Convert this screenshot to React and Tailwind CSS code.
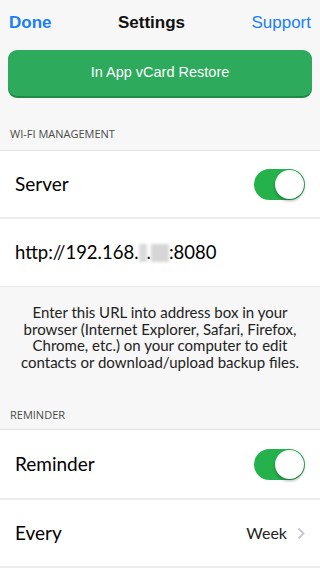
import React, { useState } from "react";

const Toggle = ({ on, setOn }) => (
  <button
    onClick={() => setOn(!on)}
    className={`relative w-[51px] h-[31px] rounded-full transition-colors ${on ? "bg-[#25b14b]" : "bg-[#e5e5e5]"}`}
  >
    <span
      className={`absolute top-[1px] w-[29px] h-[29px] rounded-full bg-white shadow-[0_2px_3px_rgba(0,0,0,0.3)] transition-all ${on ? "left-[21px]" : "left-[1px]"}`}
    />
  </button>
);

const App = () => {
  const [server, setServer] = useState(true);
  const [reminder, setReminder] = useState(true);

  return (
    <div className="w-[320px] h-[568px] overflow-hidden bg-[#f7f7f7] text-black font-['Lato',sans-serif]">
      {/* Nav */}
      <div className="flex items-center justify-between h-[44px] px-[9px] pt-[1px] font-['Liberation_Sans',sans-serif] text-[17px]">
        <span className="text-[#1a7ef7] font-bold">Done</span>
        <span className="font-bold text-[#111]">Settings</span>
        <span className="text-[#1a7ef7]">Support</span>
      </div>

      {/* Restore button */}
      <div className="px-[8px] pt-[6px]">
        <button className="w-full h-[46px] rounded-[9px] bg-[#2daa5b] shadow-[0_2px_0_#208a47] text-white text-[14.5px] font-['Liberation_Sans',sans-serif]">
          In App vCard Restore
        </button>
      </div>

      {/* Wi-Fi section */}
      <p className="mt-[31px] px-[10px] text-[11px] text-[#4a4a4a] leading-[13px] font-['Open_Sans',sans-serif]">WI-FI MANAGEMENT</p>
      <div className="mt-[10px] bg-white border-t border-[#e2e2e2]">
        <div className="flex items-center justify-between h-[66px] pl-[15px] pr-[15px]">
          <span className="text-[19px]">Server</span>
          <Toggle on={server} setOn={setServer} />
        </div>
        <div className="h-[2px] bg-[#ececec]" />
        <div className="flex items-center h-[67px] pl-[15px] text-[18.5px]">
          http://192.168.
          <span className="inline-block w-[8px] h-[18px] bg-[#dadada] blur-[1.5px]" />
          .
          <span className="inline-block w-[18px] h-[18px] bg-[#d6d6d6] blur-[1.5px]" />
          :8080
        </div>
      </div>
      <div className="h-[1px] bg-[#ececec]" />

      <p className="mt-[17px] px-[14px] text-center text-[15px] leading-[16.5px] text-[#222]">
        Enter this URL into address box in your browser (Internet Explorer, Safari, Firefox, Chrome, etc.) on your computer to edit contacts or download/upload backup files.
      </p>

      {/* Reminder section */}
      <p className="mt-[38px] px-[10px] text-[11px] text-[#4a4a4a] leading-[13px] font-['Open_Sans',sans-serif]">REMINDER</p>
      <div className="mt-[8px] bg-white border-t border-[#e2e2e2]">
        <div className="flex items-center justify-between h-[68px] pl-[15px] pr-[15px]">
          <span className="text-[19px]">Reminder</span>
          <Toggle on={reminder} setOn={setReminder} />
        </div>
        <div className="h-[2px] bg-[#ececec]" />
        <div className="flex items-center justify-between h-[66px] pl-[15px] pr-[15px]">
          <span className="text-[19px]">Every</span>
          <span className="flex items-center gap-[10px] text-[16px] text-[#222]">
            Week
            <svg width="8" height="13" viewBox="0 0 8 13" fill="none">
              <path d="M1.5 1.5 L6.5 6.5 L1.5 11.5" stroke="#c7c7cc" strokeWidth="1.8" />
            </svg>
          </span>
        </div>
        <div className="h-[2px] bg-[#ececec]" />
      </div>
    </div>
  );
};

export default App;
